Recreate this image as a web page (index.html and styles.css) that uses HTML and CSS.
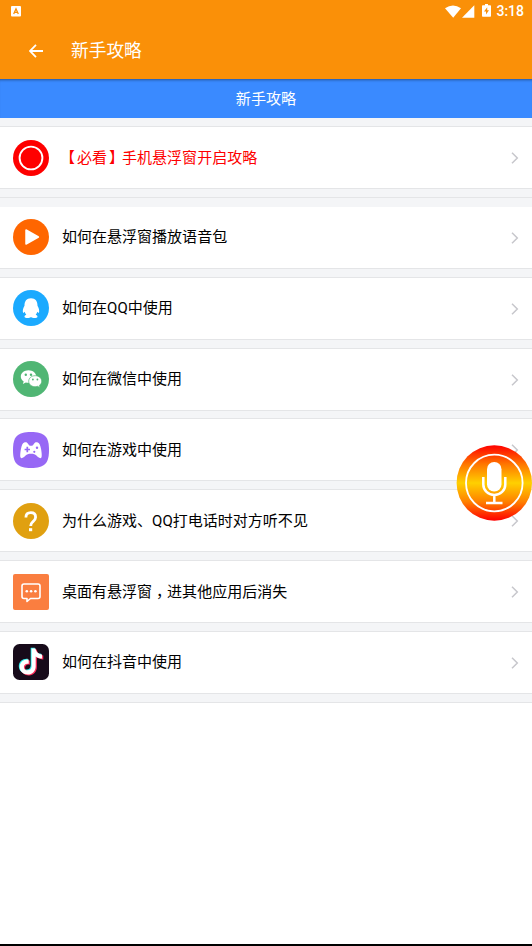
FILE: index.html
```html
<!DOCTYPE html>
<html lang="zh-CN">
<head>
<meta charset="utf-8">
<meta name="viewport" content="width=device-width">
<title>新手攻略</title>
<link rel="stylesheet" href="styles.css">
</head>
<body>
<div class="screen">
  <header class="header">
    <div class="status">
      <svg class="status-app" width="10" height="11" viewBox="0 0 10 11"><rect width="10" height="10.5" rx="1" fill="#fff"/><path d="M2.7 8 5 2.8 7.3 8M3.5 6.4h3" fill="none" stroke="#fa9008" stroke-width="1.3"/></svg>
      <svg class="wifi" width="16" height="13" viewBox="0 0 16 13"><path d="M0 3.2Q8-2.4 16 3.2L8.2 12.8Z" fill="#fff"/></svg>
      <svg class="signal" width="13" height="13" viewBox="0 0 13 13"><path d="M12.3.3v12.4H0z" fill="#fff"/></svg>
      <svg class="battery" width="9" height="13" viewBox="0 0 9 13"><path d="M3 0h3v1.2h2.2q.8 0 .8.8v10q0 .8-.8.8H.8Q0 12.800 0 12V2q0-.8.8-.8H3z" fill="#fff"/><path d="M5.200 3.300 2 7.500h2v3l3-4.200H5.200z" fill="#fa9008"/></svg>
      <span class="clock">3:18</span>
    </div>
    <div class="toolbar">
      <svg width="14" height="14" viewBox="0 0 14 14"><path d="M14 7H1.200M7 .8.9 7 7 13.200" fill="none" stroke="#fff" stroke-width="1.800"/></svg>
      <h1 class="title">新手攻略</h1>
    </div>
  </header>
  <div class="banner">新手攻略</div>
  <main class="list">
    <div class="row featured">
      <svg class="icon" viewBox="0 0 36 36"><circle cx="18" cy="18" r="18" fill="#fe0000"/><circle cx="18" cy="18" r="11.400" fill="none" stroke="#fff" stroke-width="1.900"/></svg>
      <span class="label"><span class="open">【</span>必看<span class="close">】</span>手机悬浮窗开启攻略</span>
      <svg class="chevron" viewBox="0 0 8 12"><path d="m1 .8 5.300 5.200L1 11.200"/></svg>
    </div>
    <div class="divider"></div>
    <div class="row first">
      <svg class="icon" viewBox="0 0 36 36"><circle cx="18" cy="18" r="18" fill="#ff6600"/><path d="M13 11v14l12.400-7z" fill="#fff" stroke="#fff" stroke-width="1.500" stroke-linejoin="round"/></svg>
      <span class="label">如何在悬浮窗播放语音包</span>
      <svg class="chevron" viewBox="0 0 8 12"><path d="m1 .8 5.300 5.200L1 11.200"/></svg>
    </div>
    <div class="row">
      <svg class="icon" viewBox="0 0 36 36"><circle cx="18" cy="18" r="18" fill="#1baaff"/><path d="M18 8.200c-4.500 0-6.600 3.100-6.500 7.600-1.300 2.200-2.200 4.900-1.400 7.200.5 0 1.100-.5 1.500-1.200.3 1.200.9 2.100 1.700 2.900-1.500.5-2 1.300-1.700 2.200.5 1.500 5 1.300 6.400.1 1.400 1.200 5.900 1.400 6.400-.1.300-.9-.2-1.700-1.700-2.200.8-.8 1.400-1.700 1.700-2.900.4.700 1 1.200 1.500 1.200.8-2.300-.1-5-1.400-7.200.1-4.500-2-7.600-6.500-7.600z" fill="#fff"/></svg>
      <span class="label">如何在QQ中使用</span>
      <svg class="chevron" viewBox="0 0 8 12"><path d="m1 .8 5.300 5.200L1 11.200"/></svg>
    </div>
    <div class="row">
      <svg class="icon" viewBox="0 0 36 36"><circle cx="18" cy="18" r="18" fill="#50b674"/><path d="M15.500 9.200c-4.300 0-7.700 2.800-7.700 6.300 0 2 1.100 3.800 2.900 4.900l-.9 2.600 3-1.600c.9.300 1.800.4 2.700.4 4.300 0 7.700-2.800 7.700-6.300s-3.400-6.300-7.700-6.300z" fill="#fff"/><path d="M22.200 14.700c3.700 0 6.500 2.400 6.500 5.500 0 1.700-.9 3.200-2.300 4.200l.6 2.200-2.500-1.300c-.7.2-1.500.4-2.300.4-3.700 0-6.500-2.400-6.500-5.500s2.800-5.500 6.500-5.500z" fill="#fff" stroke="#50b674" stroke-width=".7"/><g fill="#50b674"><circle cx="12.800" cy="13.700" r="1.200"/><circle cx="18" cy="13.700" r="1.200"/><circle cx="19.900" cy="18.500" r=".9"/><circle cx="24.400" cy="18.500" r=".9"/></g></svg>
      <span class="label">如何在微信中使用</span>
      <svg class="chevron" viewBox="0 0 8 12"><path d="m1 .8 5.300 5.200L1 11.200"/></svg>
    </div>
    <div class="row">
      <svg class="icon" viewBox="0 0 36 36"><path d="M18 0c13.500 0 18 4.500 18 18s-4.500 18-18 18S0 31.500 0 18 4.500 0 18 0z" fill="#9768f5"/><path d="M11.800 10.200c1.500-.3 2.700.3 3.600 2 .5 1 1.300 1.500 2.600 1.500s2.100-.5 2.600-1.500c.9-1.700 2.100-2.300 3.600-2 2.200.5 3 2.700 3.800 6.500.7 3.500 1.100 7.700.4 8.900-1.200 1.600-3.400-.5-5-2-1.300-1.200-2.700-1.800-5.400-1.800s-4.100.6-5.400 1.800c-1.600 1.500-3.800 3.600-5 2-.7-1.200-.3-5.400.4-8.900.8-3.800 1.600-6 3.800-6.500z" fill="#fff"/><path d="M14.300 14.800v5.400M11.600 17.500H17" stroke="#9768f5" stroke-width="1.700"/><g fill="#9768f5"><circle cx="24" cy="15.700" r="1.200"/><circle cx="21.300" cy="19.800" r="1.100"/></g></svg>
      <span class="label">如何在游戏中使用</span>
      <svg class="chevron" viewBox="0 0 8 12"><path d="m1 .8 5.300 5.200L1 11.200"/></svg>
    </div>
    <div class="row">
      <svg class="icon" viewBox="0 0 36 36"><circle cx="18" cy="18" r="18" fill="#e0a010"/><path d="M12.900 14.400c0-3 2-4.700 4.900-4.700s4.800 1.700 4.800 4.500c0 2.300-1.300 3.400-2.800 4.600-1.400 1.200-2.100 2-2.100 4.200" fill="none" stroke="#fff" stroke-width="2.800"/><rect x="16" y="25.200" width="3.200" height="3" fill="#fff"/></svg>
      <span class="label">为什么游戏、QQ打电话时对方听不见</span>
      <svg class="chevron" viewBox="0 0 8 12"><path d="m1 .8 5.300 5.200L1 11.200"/></svg>
    </div>
    <div class="row">
      <svg class="icon" viewBox="0 0 36 36"><rect width="36" height="36" rx="2" fill="#fa7e40"/><path d="M11 10h14q2 0 2 2v10.500q0 2-2 2h-7.500l-3.500 3v-3h-3q-2 0-2-2V12q0-2 2-2z" fill="none" stroke="#fff" stroke-width="1.600" stroke-linejoin="round"/><g fill="#fff"><circle cx="13.800" cy="17.200" r="1.300"/><circle cx="18.100" cy="17.200" r="1.300"/><circle cx="22.400" cy="17.200" r="1.300"/></g></svg>
      <span class="label">桌面有悬浮窗<span class="comma">，</span>进其他应用后消失</span>
      <svg class="chevron" viewBox="0 0 8 12"><path d="m1 .8 5.300 5.200L1 11.200"/></svg>
    </div>
    <div class="row">
      <svg class="icon" viewBox="0 0 36 36"><rect width="36" height="36" rx="6.500" fill="#170b1a"/><defs><path id="note" d="M18.600 4.500h4c.4 3.400 2.900 5.700 6.500 6v4c-2.500 0-4.700-.8-6.400-2.100v9.800c0 4.900-3.400 8.300-8 8.300-4.500 0-8-3.200-8-7.500 0-4.700 4-8 9-7.400v4.200c-2.700-.7-4.800.8-4.800 3.100 0 2 1.500 3.400 3.600 3.400 2.500 0 4.100-1.500 4.100-4.300z"/></defs><use href="#note" x="-.9" y="-.8" fill="#35eeee"/><use href="#note" x="1.200" y=".9" fill="#fb2b58"/><use href="#note" fill="#fff"/></svg>
      <span class="label">如何在抖音中使用</span>
      <svg class="chevron" viewBox="0 0 8 12"><path d="m1 .8 5.300 5.200L1 11.200"/></svg>
    </div>
  </main>
  <div class="nav-edge"></div>
  <svg class="mic" viewBox="0 0 76 76"><defs><linearGradient id="fire" x1="0" y1="0" x2="0" y2="1"><stop offset="0" stop-color="#ff0000"/><stop offset=".25" stop-color="#ff7600"/><stop offset=".5" stop-color="#ffd000"/><stop offset=".75" stop-color="#ff8000"/><stop offset="1" stop-color="#ff0000"/></linearGradient></defs><circle cx="38.300" cy="38" r="37.700" fill="url(#fire)"/><circle cx="38.300" cy="38" r="28.300" fill="none" stroke="#fff" stroke-width="1.800"/><rect x="31" y="17" width="14.500" height="29.500" rx="7.200" fill="#fff"/><path d="M27.300 32v7.500a11 10.500 0 0 0 22 0V32M38.300 50v7.500M30 58h16.500" fill="none" stroke="#fff" stroke-width="2.500"/></svg>
</div>
</body>
</html>
```
FILE: styles.css
```css
* {
  box-sizing: border-box;
}

body {
  margin: 0;
  font-family: Roboto, "Noto Sans CJK SC", sans-serif;
  background: #fff;
}

svg {
  display: block;
  flex: none;
}

.screen {
  position: relative;
  display: flex;
  flex-direction: column;
  height: 946px;
  overflow: hidden;
}

.header {
  flex: none;
  height: 79px;
  background: #fa9008;
  color: #fff;
}

.status {
  display: flex;
  align-items: center;
  height: 22px;
  padding: 0 8px 0 11px;
}

.wifi {
  margin-left: auto;
}

.signal {
  margin-left: 1px;
}

.battery {
  margin: -2px 5px 0 7px;
}

.clock {
  font-size: 14px;
  font-weight: 500;
  line-height: 22px;
}

.toolbar {
  display: flex;
  align-items: center;
  gap: 28px;
  height: 57px;
  padding-left: 29px;
}

.title {
  margin: 0;
  font-size: 17.7px;
  font-weight: 400;
  line-height: 26px;
}

.banner {
  flex: none;
  height: 39px;
  background: #3a8aff;
  box-shadow: inset 0 3px 3px -2px rgba(0, 0, 0, 0.4);
  color: #fff;
  font-size: 15.1px;
  line-height: 40px;
  text-align: center;
}

.list {
  flex: none;
  display: flex;
  flex-direction: column;
  gap: 7.850px;
  padding: 8px 0 7.800px;
  border-bottom: 1px solid #e4e5e7;
  background: #f4f5f7;
}

.row {
  display: flex;
  align-items: center;
  height: 63px;
  padding: 0 13px;
  border: solid #e4e5e7;
  border-width: 1px 0;
  background: #fff;
}

.featured {
  color: #fe0000;
}

.divider {
  height: 1px;
  margin-bottom: 0.200px;
  background: #e4e5e7;
}

.row.first {
  border-top-color: #f4f5f7;
}

.icon {
  width: 36px;
  height: 36px;
}

.label {
  flex: 1;
  margin-left: 13px;
  font-size: 15.030px;
  line-height: 24px;
  white-space: nowrap;
}

/* Half-width punctuation, centred in a full-width cell by its margins */
.open,
.close,
.comma {
  font-feature-settings: "halt";
}

.open {
  margin: 0 2px 0 5.500px;
}

.close {
  margin: 0 5.500px 0 2px;
}

.comma {
  margin: 0 3.500px 0 4px;
}

.chevron {
  width: 8px;
  height: 12px;
  margin-top: 1px;
  fill: none;
  stroke: #c7c7cc;
  stroke-width: 1.500;
}

.nav-edge {
  flex: none;
  height: 2px;
  margin-top: auto;
  background: #000;
}

.mic {
  position: absolute;
  top: 445px;
  left: 456px;
  width: 76px;
  height: 76px;
}
```
